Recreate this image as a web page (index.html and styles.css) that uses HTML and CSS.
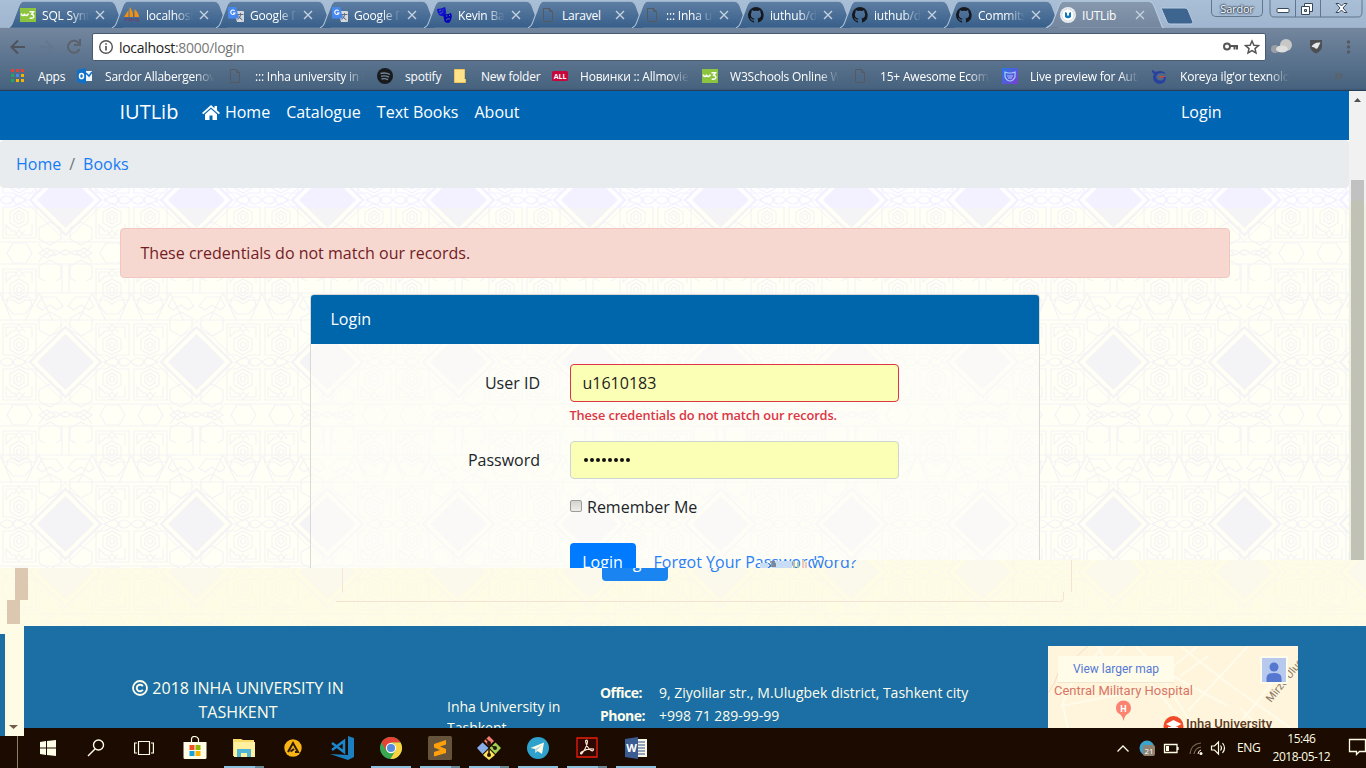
FILE: index.html
```html
<!DOCTYPE html>
<html lang="en">
<head>
<meta charset="utf-8">
<title>IUTLib</title>
<link rel="stylesheet" href="styles.css">
</head>
<body>
<svg class="defs" width="0" height="0" aria-hidden="true">
  <defs>
    <linearGradient id="tabfill" x1="0" y1="0" x2="0" y2="1"><stop offset="0" stop-color="#5f7fa4"/><stop offset="1" stop-color="#375f8a"/></linearGradient>
    <linearGradient id="activefill" x1="0" y1="0" x2="0" y2="1"><stop offset="0" stop-color="#8799ae"/><stop offset="1" stop-color="#73869e"/></linearGradient>
    <linearGradient id="live" x1="0" y1="0" x2="1" y2="1"><stop offset="0" stop-color="#2878e8"/><stop offset="1" stop-color="#7b3fd0"/></linearGradient>
    <symbol id="tab" viewBox="0 0 120 28"><path d="M2 28 C5 27 6 25 7 22 L13 6 Q15 1 18 1 L106 1 Q110 1 112 6 L120 28Z" fill="url(#tabfill)"/><path d="M2 28 C5 27 6 25 7 22 L13 6 Q15 1 18 1 L106 1 Q110 1 112 6 L120 28" fill="none" stroke="#a9bed4" stroke-width="1.2"/></symbol>
    <symbol id="tab-active" viewBox="0 0 120 28"><path d="M0 28 C4 27 5 25 7 22 L13 6 Q15 1 18 1 L104 1 Q108 1 110 6 L117 24 Q118 28 120 28Z" fill="url(#activefill)"/><path d="M0 28 C4 27 5 25 7 22 L13 6 Q15 1 18 1 L104 1 Q108 1 110 6 L117 24 Q118 28 120 28" fill="none" stroke="#b7c9dd" stroke-width="1.2"/></symbol>
    <symbol id="close" viewBox="0 0 10 10"><path d="M1 1l8 8M9 1l-8 8" stroke="#c3d0de" stroke-width="1.4"/></symbol>
    <symbol id="w3" viewBox="0 0 16 16"><rect y="1" width="16" height="14" fill="#8bc53f"/><path d="M1.500 6.500v1q1.500 2 3 0v-1v1q1.500 2 3.500 0v-1M9.500 4.800h4l-1.800 2.500q2.500.5 2 2.700-1 2-4 1" fill="none" stroke="#fff" stroke-width="1.500"/></symbol>
    <symbol id="pma" viewBox="0 0 16 16"><path d="M0 10L4.500 3v7zM5.500 10V0q4 4 3.500 10zM10.500 10V2q4 3 4.500 8z" fill="#f29111"/><path d="M1 15v-4h2v2H1m4 2v-4v2h2v-2v4m2 0v-4l1.500 2 1.500-2v4m1 0l1-4 1 4" fill="none" stroke="#5c4c78" stroke-width="1"/></symbol>
    <symbol id="translate" viewBox="0 0 16 16"><path d="M6 4h9q1 0 1 1v9q0 1-1 1H9z" fill="#d6d9de"/><path d="M9.500 7.500h6M12.500 6v2q0 3-3 4.500m1-4q1 3 4 4.500" stroke="#66707c" fill="none"/><path d="M1 0h7l3 11.500H1q-1 0-1-1V1q0-1 1-1z" fill="#4889f0"/><path d="M6.600 3.800A2.200 2.200 0 1 0 7 6H5" fill="none" stroke="#fff" stroke-width="1.100"/></symbol>
    <symbol id="masks" viewBox="0 0 16 16"><path d="M1 2q4 0 8-2 2 5 0 9-3 1-6-1-2-3-2-6z" fill="#1111cf"/><path d="M8 7q3 1 7-1 2 4-1 9-2 2-5 0-2-3-1-8z" fill="#0505b8"/><path d="M3 4l2-1M6.500 3l1-.5M3.500 6.500q2 0 3.500-2M10 9h1.500M13 8.500h1M10 13q2-2 4-1" stroke="#517195" fill="none"/></symbol>
    <symbol id="doc" viewBox="0 0 16 16"><path d="M3.500 1.500H9.500L12.500 4.500v10H3.500zM9.500 1.500V4.500H12.500" fill="none" stroke="#565a60"/></symbol>
    <symbol id="github" viewBox="0 0 16 16"><path fill="#15191e" d="M8 0a8 8 0 0 0-2.500 15.600c.4.100.5-.2.500-.4v-1.500c-2.200.5-2.700-1-2.700-1-.4-.9-.9-1.200-.9-1.200-.7-.5.1-.5.1-.5.800.1 1.200.8 1.200.8.700 1.200 1.900.9 2.300.7.100-.5.300-.9.500-1.100-1.800-.2-3.600-.9-3.600-4 0-.9.300-1.600.8-2.100-.1-.2-.4-1 .1-2.100 0 0 .7-.2 2.200.8a7.500 7.500 0 0 1 4 0c1.500-1 2.200-.8 2.200-.8.400 1.100.2 1.900.1 2.100.5.600.8 1.300.8 2.100 0 3.100-1.900 3.700-3.700 3.900.3.300.6.800.6 1.500v2.200c0 .2.100.5.600.4A8 8 0 0 0 8 0z"/></symbol>
    <symbol id="iut" viewBox="0 0 16 16"><circle cx="8" cy="8" r="8" fill="#e8edf1"/><circle cx="8" cy="8" r="6" fill="#fff" stroke="#c8cdd0" stroke-dasharray="1.500 1"/><path d="M5 5l2 1v2.500h2V6l2-1v5q-3 2.500-6 0z" fill="#1476b8"/></symbol>
    <symbol id="copy" viewBox="0 0 16 16"><circle cx="8" cy="8" r="7" fill="none" stroke="#fffde9" stroke-width="1.800"/><path d="M10.800 6.200A3.300 3.300 0 1 0 10.800 9.800" fill="none" stroke="#fffde9" stroke-width="1.900"/></symbol>
    <g id="tile" fill="none" stroke="currentColor" stroke-width="1.200">
      <path d="M65.500 40L107 81l-41.500 41L24 81z" stroke-width="1"/>
      <path d="M65.500 46L101 81l-35.500 35L30 81z" stroke-width="2.400"/>
      <path class="gem" d="M65.500 53L94 81l-28.500 28L37 81z" stroke="none"/>
      <path id="rosette" d="M19 53l9 5v11l-9 5-9-5V58zM19 57l5 3v7l-5 3-5-3v-7zM19 61a2.500 3 0 1 0 .1 0M3 43H36V74H25l-6 4-6-4H3zM6 46h9l4 5 4-5h9v11M6 46v10l7-7M19 43l-5 8M19 43l6 8"/>
      <use href="#rosette" x="93"/>
      <use href="#rosette" transform="matrix(1 0 0 -1 0 162)"/>
      <use href="#rosette" transform="matrix(1 0 0 -1 93 162)"/>
      <use href="#rosette" y="107"/><use href="#rosette" x="93" y="107"/>
      <use href="#rosette" y="-55"/><use href="#rosette" x="93" y="-55"/>
      <path d="M0 123H131M0 145H131M0 12H131M0 39H131"/>
      <path d="M13 124h13l6 10-6 10H13L7 134zM106 124h13l6 10-6 10h-13l-6-10z"/>
      <path d="M50 103l11 6v11l-11 6-11-6v-11zM81 103l11 6v11l-11 6-11-6v-11zM50 141l11 6v12l-11 6-11-6v-12zM81 141l11 6v12l-11 6-11-6v-12zM50 31l11 6v12l-11 6-11-6V37zM81 31l11 6v12l-11 6-11-6V37z"/>
      <path d="M39 125q10 18 22 8 4-4 9 0 11 9 22-8M39 143q10-18 22-9 4 4 9 0 11-8 22 9M39 134l8-5 8 5-8 5zM76 134l8-5 8 5-8 5z"/>
      <path d="M8 17l6-2 5 3 5-3 6 2 2 7-7 9H13L6 24zM101 17l6-2 5 3 5-3 6 2 2 7-7 9h-12l-7-9zM37 25l5-9h14l7 9-6 4-7-5-8 5zM68 25l7-9h14l5 9-5 4-8-5-7 5zM0 12l12 28M39 12L25 40M39 12l14 28M92 12L78 40M92 12l14 28M131 12l-12 28M62 145v17M69 145v17M62 0v12M69 0v12"/>
      <path d="M0 81q7-8 14 0-7 8-14 0M17 76l10 5-10 5-5-5zM104 81l10-5 6 5-6 5zM117 81q7-8 14 0-7 8-14 0"/>
    </g>
    <pattern id="girih" class="tile-cream" width="131" height="162" patternUnits="userSpaceOnUse" y="93"><use href="#tile"/></pattern>
    <pattern id="girih-top" class="tile-lilac" width="131" height="162" patternUnits="userSpaceOnUse" y="93"><use href="#tile"/></pattern>
  </defs>
</svg>

<div class="screen">
  <header class="chrome">
    <div class="tabs">
      <div class="tab"><svg class="shape"><use href="#tab"/></svg><svg class="fav"><use href="#w3"/></svg><span>SQL Syntax</span><svg class="x"><use href="#close"/></svg></div>
      <div class="tab"><svg class="shape"><use href="#tab"/></svg><svg class="fav"><use href="#pma"/></svg><span>localhost</span><svg class="x"><use href="#close"/></svg></div>
      <div class="tab"><svg class="shape"><use href="#tab"/></svg><svg class="fav"><use href="#translate"/></svg><span>Google П</span><svg class="x"><use href="#close"/></svg></div>
      <div class="tab"><svg class="shape"><use href="#tab"/></svg><svg class="fav"><use href="#translate"/></svg><span>Google П</span><svg class="x"><use href="#close"/></svg></div>
      <div class="tab"><svg class="shape"><use href="#tab"/></svg><svg class="fav"><use href="#masks"/></svg><span>Kevin Bac</span><svg class="x"><use href="#close"/></svg></div>
      <div class="tab"><svg class="shape"><use href="#tab"/></svg><svg class="fav"><use href="#doc"/></svg><span class="full">Laravel</span><svg class="x"><use href="#close"/></svg></div>
      <div class="tab"><svg class="shape"><use href="#tab"/></svg><svg class="fav"><use href="#doc"/></svg><span>::: Inha un</span><svg class="x"><use href="#close"/></svg></div>
      <div class="tab"><svg class="shape"><use href="#tab"/></svg><svg class="fav"><use href="#github"/></svg><span>iuthub/da</span><svg class="x"><use href="#close"/></svg></div>
      <div class="tab"><svg class="shape"><use href="#tab"/></svg><svg class="fav"><use href="#github"/></svg><span>iuthub/da</span><svg class="x"><use href="#close"/></svg></div>
      <div class="tab"><svg class="shape"><use href="#tab"/></svg><svg class="fav"><use href="#github"/></svg><span>Commits</span><svg class="x"><use href="#close"/></svg></div>
      <div class="tab"><svg class="shape"><use href="#tab-active"/></svg><svg class="fav"><use href="#iut"/></svg><span class="full">IUTLib</span><svg class="x"><use href="#close"/></svg></div>
      <svg class="newtab" viewBox="0 0 34 18"><path d="M1 1h24q2 0 3 2l5 12q0 2-2 2H10q-2 0-3-2z" fill="#3e658f" stroke="#b9cce0"/></svg>
      <div class="profile">Sardor</div>
      <svg class="winctl" viewBox="0 0 94 18"><path d="M1 0v12q0 5 4 5h84q4 0 4-5V0M26.500 0v17M51.500 0v17" fill="none" stroke="#60768f"/><rect x="8" y="8.500" width="12" height="4" rx="1" fill="#fff" stroke="#38485c"/><path d="M35.500 3.500h8v8h-8z" fill="#fff" stroke="#38485c"/><path d="M32.500 6.500h8v8h-8z" fill="#fff" stroke="#38485c"/><path d="M35.500 9.500h2v2h-2z" fill="#9db1c8" stroke="#38485c"/><path d="M67 3.500h3l2.500 2.500L75 3.500h3L74 8l4 4.500h-3L72.500 10 70 12.500h-3L71 8z" fill="#fff" stroke="#38485c"/></svg>
    </div>
    <div class="toolbar">
      <svg class="navbtns" viewBox="0 0 92 36"><path d="M25 19H12M18 12.500L11.500 19l6.500 6.500" fill="none" stroke="#4d545d" stroke-width="2"/><path d="M40 19h12M46 13l6 6-6 6" fill="none" stroke="#64778e" stroke-width="2"/><path d="M79 15.500A6 6 0 1 0 79.500 21M80 11v6h-6" fill="none" stroke="#5b626c" stroke-width="2"/></svg>
      <div class="urlbar">
        <svg class="info" viewBox="0 0 16 16"><circle cx="8" cy="8" r="6.300" fill="none" stroke="#555" stroke-width="1.400"/><path d="M8 7v4.500M8 4.300v1.500" stroke="#555" stroke-width="1.700"/></svg>
        <span class="host">localhost</span><span class="path">:8000/login</span>
        <svg class="key" viewBox="0 0 44 18"><circle cx="5" cy="8.500" r="3" fill="none" stroke="#555" stroke-width="2"/><path d="M8 8h8M12.500 8v3.500M15 8v3.500" stroke="#555" stroke-width="2"/><path d="M30 3l1.900 4.200 4.600.4-3.500 3 1 4.400-4-2.400-4 2.400 1-4.400-3.500-3 4.600-.4z" fill="none" stroke="#555" stroke-width="1.500"/></svg>
      </div>
      <svg class="ext" viewBox="0 0 100 36"><circle cx="20" cy="16" r="6" fill="#c7c7c7"/><circle cx="9" cy="20" r="4" fill="#9a9fa4"/><ellipse cx="16" cy="20" rx="6" ry="3.500" fill="#dedede"/><path d="M44 11h12v6q0 5-6 7.500Q44 22 44 17z" fill="#4c4e52"/><path d="M45.500 18q2-5 9-4.500l-2 4q-1 3-3 2-1-2-4-1.500z" fill="#e5e8ea"/><g fill="#555a62"><circle cx="82.500" cy="13" r="1.700"/><circle cx="82.500" cy="18" r="1.700"/><circle cx="82.500" cy="23" r="1.700"/></g></svg>
    </div>
    <div class="bookmarks">
      <div class="bm bm-apps"><svg viewBox="0 0 16 16"><path d="M1 1h3v3H1zm5 0h3v3H6zm5 0h3v3h-3z" fill="#e34134"/><path d="M1 6h3v3H1zM1 11h3v3H1z" fill="#26a65b"/><path d="M6 6h3v3H6z" fill="#4688f1"/><path d="M11 6h3v3h-3zM6 11h3v3H6zm5 0h3v3h-3z" fill="#f5b400"/></svg><span class="full">Apps</span></div>
      <div class="bm bm-outlook"><svg viewBox="0 0 16 16"><path d="M0 2l9-2v16l-9-2z" fill="#0f72c8"/><path d="M9 3h6v10H9z" fill="#eef5fb"/><path d="M9 5l3 3 3-4" stroke="#0f72c8" fill="none" stroke-width="1.500"/><ellipse cx="4.500" cy="8" rx="2" ry="2.600" fill="none" stroke="#fff" stroke-width="1.500"/></svg><span>Sardor Allabergenov</span></div>
      <div class="bm bm-inha"><svg><use href="#doc"/></svg><span>::: Inha university in ta</span></div>
      <div class="bm bm-spotify"><svg viewBox="0 0 16 16"><circle cx="8" cy="8" r="8" fill="#191a1c"/><path d="M3.500 5.500q5-1.500 9.500 1M4 8.300q4-1.200 8 .9M4.500 11q3.500-1 6.500.7" fill="none" stroke="#74879b" stroke-width="1.400"/></svg><span class="full">spotify</span></div>
      <div class="bm bm-folder"><svg viewBox="0 0 16 16"><path d="M1.500 1.500h10v9l1 1v3h-11z" fill="#ffe28a" stroke="#eac45c"/></svg><span class="full">New folder</span></div>
      <div class="bm bm-all"><svg viewBox="0 0 16 16"><rect y="3" width="16" height="10" rx="1.500" fill="#c8073c"/><text x="8" y="10.500" text-anchor="middle" class="all">ALL</text></svg><span>Новинки :: Allmovies</span></div>
      <div class="bm bm-w3"><svg><use href="#w3"/></svg><span>W3Schools Online W</span></div>
      <div class="bm bm-15"><svg><use href="#doc"/></svg><span>15+ Awesome Ecomm</span></div>
      <div class="bm bm-live"><svg viewBox="0 0 16 16"><path d="M0 0h16v16H0z" fill="url(#live)"/><path d="M3 4l3 1h4l3-1v5q-2 4-5 4T3 9zM5 8h6M6 10h4" fill="none" stroke="#a9cbfa" stroke-width="1.200"/></svg><span>Live preview for Auto</span></div>
      <div class="bm bm-koreya"><svg viewBox="0 0 16 16"><path d="M0 2l4 2q4-2 8 0l2 2-4-1q-5 0-6 4 2 5 7 3l1-2-3-1h5q0 6-6 7-7-1-7-7l1-3-2-2z" fill="#29419e"/><path d="M7 8h5l1 1-5 1z" fill="#d0473d"/></svg><span>Koreya ilg‘or texnolog</span></div>
      <svg class="more" viewBox="0 0 10 10"><path d="M1 2l3 3-3 3M5 2l3 3-3 3" fill="none" stroke="#5c6066" stroke-width="1.500"/></svg>
    </div>
  </header>

  <div class="viewport">
    <main class="page">
      <svg class="backdrop" width="1349" height="477"><rect width="1349" height="477" fill="#fffff5"/><rect width="1349" height="380" fill="url(#girih)" transform="translate(0 97)"/><rect y="97" width="1349" height="20" fill="#fffeff"/><svg y="97" width="1349" height="20"><g transform="translate(0 -162)"><rect width="1349" height="200" fill="url(#girih-top)"/></g></svg></svg>
      <nav class="navbar">
        <div class="container">
          <a class="brand">IUTLib</a>
          <a class="link home"><svg viewBox="0 0 18 16"><path d="M9 1L0 9l1.300 1.300L9 3.600l7.700 6.700L18 9l-3-2.700V2h-2.500v2.200z" fill="#fff"/><path d="M9 5l6 5.200V16h-4.500v-4.500h-3V16H3v-5.800z" fill="#fff"/></svg>Home</a>
          <a class="link">Catalogue</a><a class="link">Text Books</a><a class="link">About</a>
          <a class="link login">Login</a>
        </div>
      </nav>
      <div class="crumbs"><a>Home</a><i>/</i><a>Books</a></div>
      <div class="container body">
        <div class="alert">These credentials do not match our records.</div>
        <section class="card">
          <h2>Login</h2>
          <form>
            <div class="row"><label>User ID</label><div class="field"><div class="input bad">u1610183</div><strong class="error">These credentials do not match our records.</strong></div></div>
            <div class="row"><label>Password</label><div class="field"><div class="input"><svg width="50" height="8" viewBox="0 0 50 8"><g fill="#111"><circle cx="3" cy="4" r="2"/><circle cx="9" cy="4" r="2"/><circle cx="15" cy="4" r="2"/><circle cx="21" cy="4" r="2"/><circle cx="27" cy="4" r="2"/><circle cx="33" cy="4" r="2"/><circle cx="39" cy="4" r="2"/><circle cx="45" cy="4" r="2"/></g></svg></div></div></div>
            <div class="remember"><span class="check"></span>Remember Me</div>
            <div class="actions"><span class="btn">Login</span><a>Forgot Your Password?</a></div>
          </form>
        </section>
      </div>
    </main>
    <div class="scroll"><svg viewBox="0 0 17 17"><path d="M5 11l3.500-4 3.500 4z" fill="#505050"/></svg><div class="thumb"></div></div>
  </div>

  <div class="seam">
    <svg class="ghost" width="1366" height="66"><rect width="1366" height="66" fill="url(#girih)"/></svg>
    <div class="panel-edge"></div>
    <div class="panel-foot"></div>
    <div class="actions shifted"><span class="btn">Login</span><a>Forgot Your Password?</a></div>
    <svg class="blocks" width="40" height="66"><path d="M15 8h13v32H15zM7 40h13v24H7z" fill="#dcc8b0"/></svg>
  </div>
  <svg class="specks" width="52" height="8"><path d="M0 3h8v5H0zM12 1h20v7H12z" fill="#c9dcf5"/><path d="M10 2h5M11 4h5M10 6h6" stroke="#29384b"/><path d="M34 1v7M38 2v6" stroke="#b0c8a0" stroke-width="2"/><path d="M43 0v8M46 2v6" stroke="#f3c7b8" stroke-width="2"/></svg>

  <footer class="footer">
    <div class="sliver"><svg width="19" height="110"><path d="M4 99h9l-4.500 4z" fill="#705c48"/></svg></div>
    <div class="copyright"><svg width="16" height="16"><use href="#copy"/></svg> 2018 INHA UNIVERSITY IN<br>TASHKENT</div>
    <div class="inst">Inha University in<br>Tashkent</div>
    <div class="contact"><b>Office:</b><span>9, Ziyolilar str., M.Ulugbek district, Tashkent city</span><b>Phone:</b><span>+998 71 289-99-99</span></div>
    <svg class="map" width="250" height="82" viewBox="0 0 250 82">
      <rect width="250" height="82" fill="#fff5dc"/>
      <g fill="none" stroke="#fffbea" stroke-width="2"><path d="M50 0l14 28M55 0L22 40 14 60l70-14M88 0l22 25 35 55M110 22l70 38M132 0l46 36 70 50M200 0l-60 65M230 30l-45 55M76 0L60 16M120 25L150 0M100 34l40 48M15 60l5 22M192 62l20 20M160 10l-28 20"/></g>
      <path d="M40 0Q26 11 20 24M0 47q8-10 10-20" fill="none" stroke="#f3dcc8"/>
      <rect x="10" y="11" width="116" height="26" fill="#f1e7ce"/><rect x="10" y="10" width="116" height="26" fill="#fffdea"/>
      <text x="25" y="27" class="m-link" textLength="86">View larger map</text>
      <text x="6" y="48.500" class="m-hosp" textLength="139">Central Military Hospital</text>
      <path d="M75.500 75q-1-6-5.500-8a7.500 7.500 0 1 1 11 0q-4.500 2-5.500 8z" fill="#fb8370"/><text x="75.500" y="66" text-anchor="middle" class="m-h">H</text>
      <circle cx="125.500" cy="80" r="10" fill="#f04a28"/><path d="M118 78l7.500-4 8 4-8 4z" fill="#fff"/><path d="M120 81v5h10v-5" fill="#fff"/>
      <text x="138" y="82" class="m-inha" textLength="86">Inha University</text>
      <text transform="translate(223 57) rotate(-51)" class="m-road">Mirzo Ulug'b</text>
      <rect x="212" y="10" width="28" height="28" fill="#fffdea"/><rect x="214" y="12" width="24" height="24" fill="#b8c9ee"/><circle cx="226" cy="21" r="4.500" fill="#5577cf"/><path d="M218.500 36v-4q0-5 7.500-5t7.500 5v4z" fill="#5577cf"/>
    </svg>
  </footer>

  <div class="taskbar">
    <div class="apps">
      <div class="app"><svg viewBox="0 0 24 24"><path d="M4 6l6-1v6.500H4zM11 5l9-1v7.500h-9zM4 12.500h6V19l-6-1zM11 12.500h9V20l-9-1z" fill="#fffde6"/></svg></div>
      <div class="app"><svg viewBox="0 0 24 24"><circle cx="13.500" cy="9" r="5" fill="none" stroke="#fffde6" stroke-width="1.400"/><path d="M10 13l-7 7" stroke="#fffde6" stroke-width="1.500"/></svg></div>
      <div class="app"><svg viewBox="0 0 24 24"><path d="M4.500 5.500h11v13h-11zM3 7H.6v10H3M17 7h2.400v10H17" fill="none" stroke="#fffde6" stroke-width="1.200"/></svg></div>
      <div class="app"><svg viewBox="0 0 24 24"><path d="M8.500 6V3q0-2.500 3-2.500t4 2.500v3" fill="none" stroke="#fffde6" stroke-width="1.200"/><path d="M.5 6h23v15.500q0 1.500-1.500 1.500H2Q.5 23 .5 21.500z" fill="#fffde6"/><path d="M6.500 9h5v5h-5z" fill="#f25022"/><path d="M12.500 9h5v5h-5z" fill="#90b800"/><path d="M6.500 15h5v5h-5z" fill="#18a0dc"/><path d="M12.500 15h5v5h-5z" fill="#f9b400"/></svg></div>
      <div class="app run two"><svg viewBox="0 0 24 24"><path d="M1 3h8l2 1h11v16H1z" fill="#f9db6a"/><path d="M2 6h21v15H2z" fill="#fff0a0"/><path d="M5 13h14v8h-4v-4H9v4H5z" fill="#50b4d4"/></svg></div>
      <div class="app"><svg viewBox="0 0 24 24"><circle cx="12" cy="12" r="8.700" fill="#fab415"/><path d="M7 16l5-9 5 9h-3M9.500 15.500l3.500-2.500" fill="none" stroke="#2b1b0c" stroke-width="2"/></svg></div>
      <div class="app"><svg viewBox="0 0 24 24"><path d="M18 0l6 2v19l-6 3L0 18l18 1z" fill="#1b7fc0"/><path d="M2 7l12 9V5L2 14" fill="none" stroke="#1b88ce" stroke-width="2.500"/></svg></div>
      <div class="app run"><svg viewBox="0 0 24 24"><circle cx="12" cy="12" r="11" fill="#38a852"/><path d="M12 1a11 11 0 0 1 9.500 5.500H12L7.500 15 2.500 6.500A11 11 0 0 1 12 1z" fill="#e54335"/><path d="M21.500 6.500A11 11 0 0 1 11.500 23l5-8.500L16 8l-4-1.500z" fill="#fbd341"/><circle cx="12" cy="12" r="5.200" fill="#fffde6"/><circle cx="12" cy="12" r="4" fill="#568be0"/></svg></div>
      <div class="app run two"><svg viewBox="0 0 24 24"><rect width="24" height="24" rx="1.500" fill="#66533c"/><path d="M6 8l12-4v4.500l-6 2 6 2.500v4L6 20.500V16l6-2-6-2.500z" fill="#ff9f0a"/></svg></div>
      <div class="app run two"><svg viewBox="0 0 24 24"><path d="M12 0l5 5-5 5-5-5z" fill="#f57e72"/><path d="M5.500 6.500l6 5.500-6 6L0 12z" fill="#87aee8"/><path d="M18.500 6.500L24 12l-5.500 6-6-6z" fill="#a1d353"/><path d="M12 13l6 6-6 5-6-5z" fill="#fde25a"/><path d="M9 3l3 3v13M12 8l6 4" fill="none" stroke="#2a1608" stroke-width="1.500"/><circle cx="12" cy="19" r="2" fill="#2a1608"/><circle cx="12" cy="7" r="2" fill="#2a1608"/><circle cx="18" cy="12" r="2" fill="#2a1608"/></svg></div>
      <div class="app run"><svg viewBox="0 0 24 24"><circle cx="12" cy="12" r="11" fill="#2ea1cc"/><path d="M4.500 12L18 6.500 16 18l-4.500-3-2 2-.5-4z" fill="#fffde6"/><path d="M9 13l7-4-5 5-1.500 3z" fill="#bcd5db"/></svg></div>
      <div class="app run two"><svg viewBox="0 0 24 24"><path d="M2 2h20v19H2z" fill="#2e0903" stroke="#ed1c0a" stroke-width="1.300"/><path d="M10.500 5q2-2 2 1-1 6-6 12-2 0 0-2 6-4 12-3 0 3-3 1-4-3-5-9z" fill="none" stroke="#fde9d4" stroke-width="1.200"/></svg></div>
      <div class="app run"><svg viewBox="0 0 24 24"><path d="M11 3h12v18H11z" fill="#f7f7e8"/><path d="M14 6h7M14 9h7M14 12h7M14 15h7M14 18h7" stroke="#2f528d"/><path d="M1 3l13-2v22L1 21z" fill="#3b5b92"/><text x="7.500" y="16" text-anchor="middle" class="word">W</text></svg></div>
    </div>
    <div class="tray">
      <svg class="icons" width="110" height="40" viewBox="0 0 110 40"><g fill="none" stroke="#fffde6" stroke-width="1.300"><path d="M1.500 23.500L7 18l5.500 5.500"/><path d="M48.500 16.500H61v8H48.500zM62 19v3"/></g><circle cx="31" cy="20" r="7.500" fill="#3aa4cc"/><rect x="27" y="17" width="12" height="11" rx="2" fill="#8f8271"/><text x="33" y="26" text-anchor="middle" class="badge">21</text><path d="M50 18h3v5h-3z" fill="#fffde6"/><g fill="none" stroke="#796b58" stroke-width="1.200"><path d="M74 26Q75 16 85 15M78 26q1-6 7-7"/></g><path d="M82 26q0-3 3-4" fill="none" stroke="#fffde6"/><circle cx="85" cy="25.500" r="1.500" fill="#fffde6"/><path d="M95.500 18h3l4-4v12l-4-4h-3zM104.500 17.500q2 2.500 0 5M106.500 15q4 5 0 10" fill="none" stroke="#fffde6" stroke-width="1.200"/></svg>
      <span class="lang">ENG</span>
      <div class="clock">15:46<br>2018-05-12</div>
      <svg class="note" width="18" height="20" viewBox="0 0 18 20"><path d="M1.500 2.500h16v12h-6l-3 3v-3h-7z" fill="none" stroke="#fffde6" stroke-width="1.300"/></svg>
    </div>
  </div>
</div>
</body>
</html>
```
FILE: styles.css
```css
* { box-sizing: border-box; }
body { margin: 0; font-family: "Open Sans", "Noto Sans", sans-serif; }
svg { display: block; flex: none; }
.defs { position: absolute; }
.screen { position: relative; width: 1366px; height: 768px; overflow: hidden; display: flex; flex-direction: column; }
.tile-cream { color: #f4f3f5; }
.tile-lilac { color: #f3f0ff; }
.gem { fill: currentColor; }

/* browser frame */
.chrome { height: 91px; flex: none; background: linear-gradient(#73869e 28px, #47637f 88px, #3c5673 90px); border-bottom: 1px solid #273e55; color: #fff; font-size: 12px; }
.tabs { height: 28px; display: flex; background: linear-gradient(#a9bfd6, #a0b5cf); padding-left: 6px; border-bottom: 1px solid #9cafc4; }
.tab { position: relative; width: 104px; height: 28px; flex: none; display: flex; align-items: center; padding: 2px 0 0 14px; }
.shape { position: absolute; left: 0; top: 0; width: 118px; height: 28px; }
.fav { position: relative; width: 16px; height: 16px; margin-right: 6px; }
.tab span { position: relative; width: 47px; overflow: hidden; white-space: nowrap; letter-spacing: -.2px; mask-image: linear-gradient(90deg, #000 60%, transparent); }
.tab span.full, .bm span.full { mask-image: none; }
.x { position: relative; width: 10px; height: 10px; margin-left: 6px; }
.newtab { width: 34px; height: 18px; margin: 7px 0 0 10px; }
.profile { width: 52px; height: 17px; margin-left: 17px; border: 1px solid #60768f; border-top: 0; border-radius: 0 0 5px 5px; font-size: 11px; line-height: 18px; text-align: center; letter-spacing: -.2px; text-shadow: 0 0 2px #26384d, 0 0 2px #26384d, 0 0 2px #26384d; }
.winctl { width: 94px; height: 18px; margin-left: 6px; }
.toolbar { height: 35px; display: flex; align-items: flex-start; }
.navbtns { width: 92px; height: 36px; }
.urlbar { width: 1174px; height: 28px; margin-top: 5px; display: flex; align-items: center; padding-left: 5px; background: #fff; border: 1px solid #495a72; border-radius: 2px; font-size: 14px; letter-spacing: -.3px; }
.info { width: 16px; height: 16px; margin-right: 5px; }
.host { color: #222; }
.path { color: #777; }
.key { width: 44px; height: 18px; margin-left: auto; margin-right: -1px; }
.ext { width: 100px; height: 36px; margin-top: 1px; }
.bookmarks { height: 26px; display: flex; align-items: center; padding-left: 10px; }
.bm { display: flex; align-items: center; flex: none; height: 24px; }
.bm svg { width: 16px; height: 16px; }
.bm span { margin-left: 12px; white-space: nowrap; overflow: hidden; flex: 1; letter-spacing: -.2px; max-width: 109px; mask-image: linear-gradient(90deg, #000 82%, transparent); }
.bm-apps { width: 67px; } .bm-outlook { width: 150px; } .bm-inha { width: 150px; } .bm-spotify { width: 76px; } .bm-folder { width: 99px; }
.bm-all, .bm-w3, .bm-15, .bm-live, .bm-koreya { width: 150px; }
.more { width: 10px; height: 10px; margin-left: 32px; }
.all { font: bold 7px "Open Sans", sans-serif; fill: #fff; }

/* page */
.viewport { height: 477px; flex: none; display: flex; overflow: hidden; }
.page { position: relative; width: 1349px; height: 477px; overflow: hidden; color: #212529; font-size: 16px; line-height: 24px; }
.backdrop { position: absolute; inset: 0; }
.navbar, .crumbs, .body { position: relative; }
.container { width: 1140px; margin: 0 auto; padding: 0 15px; }
.navbar { height: 49px; background: #0066b3; color: #fff; }
.navbar .container { display: flex; height: 42px; align-items: center; }
.brand { font-size: 20px; margin-right: 16px; }
.link { padding: 0 8px; }
.home { display: flex; align-items: center; }
.home svg { width: 18px; height: 16px; margin-right: 4.500px; }
.login { margin-left: auto; }
.crumbs { height: 48px; padding: 12px 16px; display: flex; background: #e9ecef; border-radius: 4px; color: #147bf5; }
.crumbs i { font-style: normal; color: #6c757d; padding: 0 8px; }
.alert { height: 50px; margin-top: 40px; padding: 12px 20px; background: #f7d8d1; border: 1px solid #f3c7c1; border-radius: 4px; color: #721c24; }
.card { width: 730px; height: 326px; margin: 16px auto 0; border: 1px solid #d9dad6; border-radius: 4px; background: rgba(254, 254, 249, .6); overflow: hidden; }
.card h2 { margin: 0; height: 49px; padding: 12px 20px; font: 16px/24px "Open Sans", sans-serif; background: #0066ab; color: #fff; }
form { padding-top: 20px; }
.row { display: flex; margin-bottom: 16px; }
label { width: 229.500px; padding-top: 7px; margin-right: 29.500px; text-align: right; }
.field { width: 329px; }
.input { height: 38px; padding: 6px 12px; background: #fbffb5; border: 1px solid #ced4d0; border-radius: 4px; color: #222; display: flex; align-items: center; }
.bad { border-color: #dc3545; }
.error { display: block; margin-top: 4px; font-size: 12.8px; line-height: 19px; font-weight: 600; color: #dc3545; letter-spacing: -.12px; white-space: nowrap; }
.remember { display: flex; align-items: center; margin: 0 0 24px 259px; }
.check { width: 12px; height: 12px; margin: -2px 5.500px 0 0; border: 1px solid #9c9d98; border-radius: 2px; background: linear-gradient(#d4d5cf, #eeeee8); }
.actions { display: flex; margin-left: 259px; white-space: nowrap; line-height: 24px; }
.btn { width: 66px; height: 38px; padding: 7px 0; border-radius: 4px; background: #007bff; color: #fff; text-align: center; }
.actions a { padding: 7px 0 0 18px; color: #2c7ff5; }
.scroll { width: 17px; background: linear-gradient(#f1f1f1 110px, #efefe3 120px); }
.scroll svg { width: 17px; height: 17px; }
.thumb { width: 13px; height: 400px; margin: 72px 0 0 2px; background: linear-gradient(#c1c1c1 20px, #c1c2b6 21px); }

/* displaced band between the page and the footer */
.seam { position: relative; height: 66px; margin-top: -8px; flex: none; background: #fffce5; clip-path: polygon(0 8px, 812px 8px, 812px 0, 100% 0, 100% 100%, 0 100%); }
.ghost { position: absolute; left: 0; top: 0; opacity: .35; }
.panel-edge { width: 730px; height: 32px; margin-left: 342px; border: solid #f4e1d0; border-width: 0 1px; }
.panel-foot { width: 728px; height: 10px; margin-left: 336px; border: solid #f4e1d0; border-width: 0 1px 1px 0; border-radius: 0 0 4px 0; }
.shifted { position: absolute; top: -17px; left: 602px; margin: 0; font-size: 16px; }
.shifted .btn { background: #1a84f0; }
.specks { position: absolute; left: 760px; top: 560px; }
.blocks { position: absolute; left: 0; top: 0; }

/* footer */
.footer { position: relative; height: 102px; flex: none; display: flex; background: #1b6fa5; color: #fffde9; }
.sliver { width: 19px; height: 110px; margin-left: 5px; z-index: 2; flex: none; background: #fffce5; }
.sliver svg { width: 19px; }
.footer::before { content: ""; position: absolute; left: 0; top: 0; width: 5px; height: 8px; background: #fffce5; box-shadow: 0 102px 0 #1b6fa5; z-index: 2; }
.copyright { width: 240px; margin: 50px 0 0 94px; text-align: center; font-size: 16px; line-height: 24px; white-space: nowrap; }
.copyright svg { display: inline-block; vertical-align: -2px; }
.inst { width: 153px; height: 32px; overflow: hidden; margin: 70px 0 0 89px; font-size: 14px; line-height: 21px; }
.contact { width: 448px; display: grid; grid-template-columns: 59px 1fr; grid-auto-rows: 23px; align-content: start; padding-top: 55px; font-size: 14px; line-height: 23px; white-space: nowrap; }
.contact b { letter-spacing: -.55px; }
.map { margin-top: 20px; }
.map text { font-family: Roboto, sans-serif; }
.m-link { font-size: 12px; fill: #5578d4; }
.m-hosp { font-size: 13px; fill: #d77566; }
.m-h { font-size: 9px; fill: #fff; font-weight: bold; }
.m-inha { font-size: 13px; font-weight: 500; fill: #5c3b26; }
.m-road { font-size: 11px; fill: #8e7c6b; }

/* taskbar */
.taskbar { height: 40px; flex: none; display: flex; justify-content: space-between; background: linear-gradient(#8b7c6b, #8b7c6b) 17px 8px / 1px 32px no-repeat #1c0b00; color: #fffde6; }
.apps { display: flex; padding-left: 28px; gap: 9px; }
.app { width: 40px; height: 40px; padding: 8px; }
.app svg { width: 24px; height: 24px; }
.run { background: linear-gradient(#8cc0dd, #8cc0dd) bottom / 40px 2px no-repeat; }
.two { background: linear-gradient(90deg, #8cc0dd 31px, #6a8795 31px) bottom / 40px 2px no-repeat; }
.word { font: bold 11px "Open Sans", sans-serif; fill: #fff; }
.tray { display: flex; width: 250px; }
.badge { font: 8px "Open Sans", sans-serif; fill: #fff; }
.lang { width: 28px; margin-left: 11px; font-size: 12px; line-height: 40px; letter-spacing: -.4px; }
.clock { width: 70px; margin-left: 2px; padding-top: 2px; text-align: center; font-size: 12px; line-height: 18px; letter-spacing: -.5px; }
.note { margin: 9px 0 0 12px; }
```
